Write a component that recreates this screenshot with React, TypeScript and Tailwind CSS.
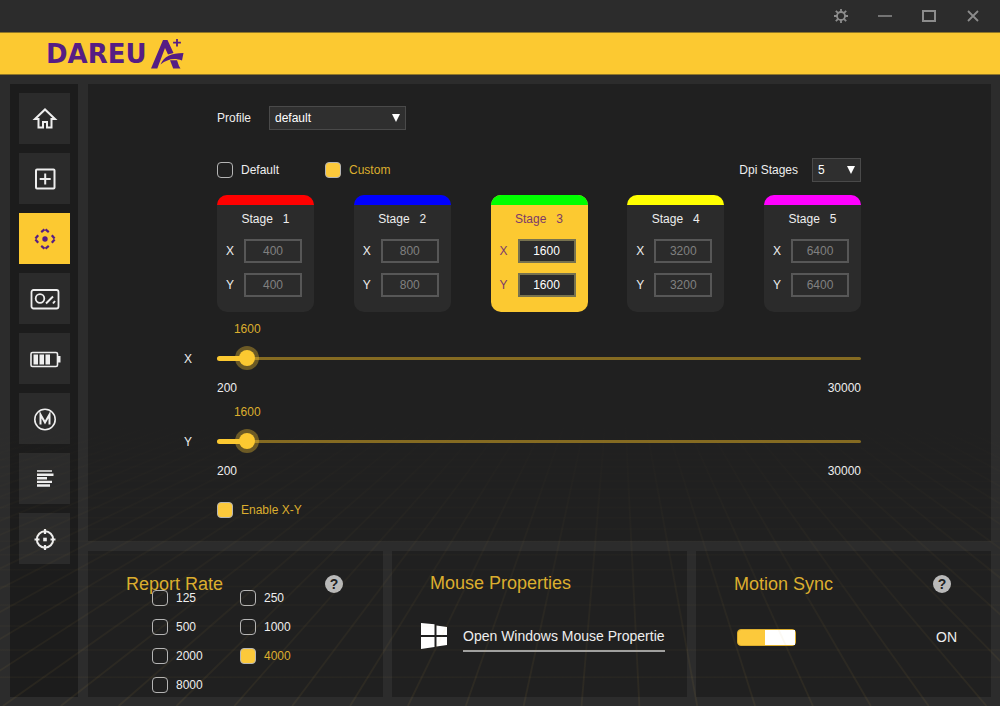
import { useState, ReactNode } from 'react'

const PURPLE = '#561d84'

const MIN_DPI = 200
const MAX_DPI = 30000

const stages = [
  { id: 1, dpi: 400, stripe: 'bg-[#ff0000]' },
  { id: 2, dpi: 800, stripe: 'bg-[#0000ff]' },
  { id: 3, dpi: 1600, stripe: 'bg-[#00ff00]' },
  { id: 4, dpi: 3200, stripe: 'bg-[#ffff00]' },
  { id: 5, dpi: 6400, stripe: 'bg-[#ff00ff]' },
]

const reportRates = [125, 250, 500, 1000, 2000, 4000, 8000]

const navItems: { id: string; label: string; icon: ReactNode }[] = [
  {
    id: 'home',
    label: 'Home',
    icon: (
      <path d="M6 16 16 6.500l10 9.500h-3.500v8.500h-4.500v-5.500h-4v5.500H9.500V16z" strokeWidth="2" />
    ),
  },
  {
    id: 'keys',
    label: 'Buttons',
    icon: (
      <>
        <rect x="7" y="6.500" width="18.500" height="19" rx="1" strokeWidth="2" />
        <path d="M16.200 10.500v11M10.700 16h11" strokeWidth="2" />
      </>
    ),
  },
  {
    id: 'dpi',
    label: 'DPI',
    icon: (
      <>
        <circle cx="16" cy="16" r="2.700" fill="currentColor" stroke="none" />
        <path
          d="M12.200 9.200L16 6l3.800 3.200M12.200 22.800L16 26l3.800-3.200M9.200 12.200L6 16l3.200 3.800M22.800 12.200L26 16l-3.200 3.800"
          strokeWidth="2.200"
          strokeDasharray="4.300 1.300"
        />
      </>
    ),
  },
  {
    id: 'light',
    label: 'Light',
    icon: (
      <>
        <rect x="2.500" y="7" width="27" height="18.500" rx="2" strokeWidth="1.800" />
        <circle cx="11" cy="15.500" r="4.300" strokeWidth="1.800" />
        <path d="M17 20.500l7-7M24 20.500l2-2.500" strokeWidth="2" />
      </>
    ),
  },
  {
    id: 'battery',
    label: 'Battery',
    icon: (
      <>
        <rect x="2" y="9.500" width="26.500" height="14" rx="1.500" strokeWidth="1.600" />
        <path
          d="M4.500 11.500h4.500v10H4.500zM10.500 11.500h4.500v10h-4.500zM16.500 11.500h4.500v10h-4.500zM28.500 13h3v6.500h-3z"
          fill="currentColor"
          stroke="none"
        />
      </>
    ),
  },
  {
    id: 'macro',
    label: 'Macro',
    icon: (
      <>
        <circle cx="16" cy="16.500" r="10.200" strokeWidth="1.600" />
        <path d="M11.500 21.500V11.500l4.500 8 4.500-8v10" strokeWidth="2" />
      </>
    ),
  },
  {
    id: 'log',
    label: 'Settings',
    icon: (
      <>
        <path d="M8 8h15" strokeWidth="1.500" />
        <path d="M8 11.700h16.500M8 15.300h10M8 18.900h15M8 22.500h13" strokeWidth="2.400" />
      </>
    ),
  },
  {
    id: 'sensor',
    label: 'Sensor',
    icon: (
      <>
        <circle cx="16" cy="16.500" r="8.200" strokeWidth="2" />
        <path d="M16 6v5M16 22v5M5.500 16.500h5M21.500 16.500h5" strokeWidth="2.200" />
        <rect x="14.200" y="14.700" width="3.600" height="3.600" fill="currentColor" stroke="none" />
      </>
    ),
  },
]

// perspective floor lines, fading out towards the horizon
function FloorGrid() {
  const rays = Array.from({ length: 81 }, (_, i) => i - 40)
  const rows = Array.from({ length: 24 }, (_, i) => 1 / (0.00229 + i * 0.000178) - 148)
  return (
    <svg
      viewBox="0 0 1000 286"
      preserveAspectRatio="xMidYMax slice"
      aria-hidden="true"
      className="pointer-events-none absolute inset-x-0 bottom-0 h-[286px] w-full"
    >
      <defs>
        <linearGradient id="fade" gradientUnits="userSpaceOnUse" x1="0" y1="0" x2="0" y2="286">
          <stop offset="0" stopColor="#c9a040" stopOpacity="0" />
          <stop offset="0.5" stopColor="#c9a040" stopOpacity="0.04" />
          <stop offset="1" stopColor="#c9a040" stopOpacity="0.08" />
        </linearGradient>
      </defs>
      <g fill="none" stroke="url(#fade)">
        {rays.map((k) => {
          // vanishing point sits at (618, -148)
          const spread = 12.7 + k * 34.4
          return (
            <path
              key={k}
              strokeWidth="1.800"
              d={`M${618 + spread * 0.574} 0L${618 + spread * 1.682} 286`}
            />
          )
        })}
        {rows.filter((y) => y > 0).map((y) => (
          <path key={y} d={`M0 ${y}L1000 ${y + 0.01}`} strokeWidth="1.500" opacity="0.6" />
        ))}
      </g>
    </svg>
  )
}

function Logo() {
  return (
    <div className="flex items-center gap-1 text-[#561d84]">
      <span className="font-['DejaVu_Sans',sans-serif] text-[26px] font-bold leading-none">DAREU</span>
      <svg width="34" height="32" viewBox="0 0 34 32" aria-hidden="true" fill={PURPLE}>
        <path d="M0 30.500 12 2h4.500l6 13-5.500 1.500-3-6.500L6.300 30.500z" />
        <path d="M9.500 26.500c3.500-8 10.500-11.500 23-11.500l-1.500 7.500c-8-3-14.500-1.500-21.500 4z" />
        <path d="M19 22.300h7l2 5.700 1.500 2.500h-7.300z" />
        <path d="M25.100 1h1.800v2.800h3v1.600h-3v3h-1.800v-3h-3V3.800h3z" />
      </svg>
    </div>
  )
}

type CheckProps = {
  label: string
  checked: boolean
  onChange: () => void
}

function Check({ label, checked, onChange }: CheckProps) {
  return (
    <label className={`flex items-center gap-2 ${checked ? 'text-[#dcae2e]' : 'text-[#eeeeee]'}`}>
      <input
        type="checkbox"
        checked={checked}
        onChange={onChange}
        className="size-4 shrink-0 appearance-none rounded border border-[#b5b5b5] bg-transparent checked:bg-[#fcc93b]"
      />
      <span className="leading-4">{label}</span>
    </label>
  )
}

type SelectProps = {
  id: string
  value: string
  options: string[]
  onChange: (v: string) => void
  className: string
}

function Select({ id, value, options, onChange, className }: SelectProps) {
  return (
    <div className={`relative ${className}`}>
      <select
        id={id}
        value={value}
        onChange={(e) => onChange(e.target.value)}
        className="h-6 w-full appearance-none border border-[#4a4a4a] bg-[#2f2f2f] pl-[5px] pr-5 text-white"
      >
        {options.map((o) => (
          <option key={o}>{o}</option>
        ))}
      </select>
      <svg
        width="8"
        height="8"
        viewBox="0 0 8 8"
        aria-hidden="true"
        className="pointer-events-none absolute right-[6px] top-2"
      >
        <path d="M0 0h8L4 8z" fill="#fff" />
      </svg>
    </div>
  )
}

type StageProps = {
  id: number
  dpi: number
  stripe: string
  active: boolean
  onSelect: () => void
}

function StageCard({ id, dpi, stripe, active, onSelect }: StageProps) {
  return (
    <div
      onClick={onSelect}
      className={`w-[97px] overflow-hidden rounded-[10px] pb-[15px] ${
        active ? 'bg-[#fcc931] text-[#7b3a6a]' : 'bg-[#2b2b2b] text-[#eeeeee]'
      }`}
    >
      <div className={`h-[10px] ${stripe}`} />
      <div className="flex h-7 items-center justify-center gap-[10px]">
        <span>Stage</span>
        <span>{id}</span>
      </div>
      <div className="flex flex-col gap-[10px] pt-[6px]">
        {['X', 'Y'].map((axis) => (
          <label key={axis} className="flex items-center justify-between pl-[9px] pr-3">
            {axis}
            <input
              type="text"
              defaultValue={dpi}
              disabled={!active}
              className={`h-6 w-[58px] border-2 bg-[#2b2b2b] text-center ${
                active ? 'border-[#77724f] text-white' : 'border-[#575757] text-[#808080]'
              }`}
            />
          </label>
        ))}
      </div>
    </div>
  )
}

type SliderProps = {
  axis: string
  value: number
  onChange: (v: number) => void
}

function DpiSlider({ axis, value, onChange }: SliderProps) {
  const pct = ((value - MIN_DPI) / (MAX_DPI - MIN_DPI)) * 100
  return (
    <div className="flex items-center">
      <label htmlFor={`slider-${axis}`} className="w-[33px] text-[#eeeeee]">
        {axis}
      </label>
      <div className="flex-1">
        <div className="relative h-[22px] text-[#dcae2e]">
          <span className="absolute top-0 -translate-x-1/2 leading-4" style={{ left: `${pct}%` }}>
            {value}
          </span>
        </div>
        <div className="relative flex h-[30px] items-center">
          <div className="h-[3px] w-full rounded-full bg-[#856b22]" />
          <div className="absolute left-0 h-[5px] rounded-full bg-[#fcc931]" style={{ width: `${pct}%` }} />
          <input
            id={`slider-${axis}`}
            type="range"
            min={MIN_DPI}
            max={MAX_DPI}
            step={50}
            value={value}
            onChange={(e) => onChange(Number(e.target.value))}
            className="absolute inset-y-0 -left-2 w-[calc(100%+16px)] appearance-none bg-transparent [&::-webkit-slider-thumb]:size-4 [&::-webkit-slider-thumb]:appearance-none [&::-webkit-slider-thumb]:rounded-full [&::-webkit-slider-thumb]:bg-[#fcc931] [&::-webkit-slider-thumb]:shadow-[0_0_0_4px_rgba(252,201,49,0.35)]"
          />
        </div>
        <div className="flex justify-between pt-[7px] leading-4 text-[#eeeeee]">
          <span>{MIN_DPI}</span>
          <span>{MAX_DPI}</span>
        </div>
      </div>
    </div>
  )
}

function HelpButton() {
  return (
    <button
      type="button"
      aria-label="Help"
      className="size-[18px] rounded-full bg-[#b9b9b9] text-sm font-bold leading-[18px] text-[#202020]"
    >
      ?
    </button>
  )
}

export default function App() {
  const [profile, setProfile] = useState('default')
  const [mode, setMode] = useState('Custom')
  const [count, setCount] = useState('5')
  const [stage, setStage] = useState(3)
  const [x, setX] = useState(1600)
  const [y, setY] = useState(1600)
  const [split, setSplit] = useState(true)
  const [rate, setRate] = useState(4000)
  const [sync, setSync] = useState(true)
  const [page, setPage] = useState('dpi')

  return (
    <div className="relative flex min-h-screen flex-col bg-[#2c2c2c] font-['Liberation_Sans',Arial,sans-serif] text-xs text-white">
      <header>
        <div className="flex h-8 items-center justify-end gap-[30px] pr-5 text-[#8c8c8c]">
          <button type="button" aria-label="Settings">
            <svg width="14" height="14" viewBox="0 0 14 14" fill="none" stroke="currentColor" strokeWidth="1.800">
              <circle cx="7" cy="7" r="4" />
              <path d="M7 0v3M7 11v3M0 7h3M11 7h3M1.800 1.800l2.400 2.400M9.800 9.800l2.400 2.400M12.200 1.800L9.800 4.200M4.200 9.800l-2.400 2.400" />
            </svg>
          </button>
          <button type="button" aria-label="Minimize">
            <svg width="14" height="14" viewBox="0 0 14 14" stroke="currentColor" strokeWidth="1.500">
              <path d="M0 7h14" />
            </svg>
          </button>
          <button type="button" aria-label="Maximize">
            <svg width="14" height="14" viewBox="0 0 14 14" fill="none" stroke="currentColor" strokeWidth="2">
              <rect x="1" y="2" width="12" height="10" />
            </svg>
          </button>
          <button type="button" aria-label="Close">
            <svg width="14" height="14" viewBox="0 0 14 14" stroke="currentColor" strokeWidth="1.800">
              <path d="M2 2l10 10M12 2L2 12" />
            </svg>
          </button>
        </div>
        <div className="flex h-[43px] items-center border-y border-[#8f7628] bg-[#fcc931] pl-[46px]">
          <Logo />
        </div>
      </header>

      <div className="flex flex-1 gap-[10px] py-[9px] pl-[10px] pr-[9px]">
        <nav className="flex flex-col gap-[9px] bg-[#1c1c1c] pl-[9px] pr-2 pt-[9px]">
          {navItems.map((item) => (
            <button
              key={item.id}
              type="button"
              aria-label={item.label}
              onClick={() => setPage(item.id)}
              className={`flex size-[51px] items-center justify-center ${
                page === item.id ? 'bg-[#fcc931] text-[#561d84]' : 'bg-[#2b2b2b] text-[#eeeeee]'
              }`}
            >
              <svg width="32" height="32" viewBox="0 0 32 32" fill="none" stroke="currentColor">
                {item.icon}
              </svg>
            </button>
          ))}
        </nav>

        <main className="flex min-w-0 flex-1 flex-col gap-[10px]">
          <section className="flex-1 bg-[#202020] pl-24 pr-[130px] pt-[22px]">
            <div className="flex items-center pl-[33px]">
              <label htmlFor="profile" className="w-[52px] text-[#eeeeee]">
                Profile
              </label>
              <Select
                id="profile"
                value={profile}
                options={['default', 'game', 'office']}
                onChange={setProfile}
                className="w-[137px]"
              />
            </div>

            <div className="mt-7 flex items-center justify-between pl-[33px]">
              <div className="flex gap-[46px]">
                {['Default', 'Custom'].map((m) => (
                  <Check key={m} label={m} checked={mode === m} onChange={() => setMode(m)} />
                ))}
              </div>
              <div className="flex items-center gap-[14px]">
                <label htmlFor="count" className="text-[#eeeeee]">
                  Dpi Stages
                </label>
                <Select
                  id="count"
                  value={count}
                  options={['1', '2', '3', '4', '5']}
                  onChange={setCount}
                  className="w-[49px]"
                />
              </div>
            </div>

            <div className="mt-[13px] flex justify-between pl-[33px]">
              {stages.slice(0, Number(count)).map((s) => (
                <StageCard key={s.id} {...s} active={stage === s.id} onSelect={() => setStage(s.id)} />
              ))}
            </div>

            <div className="mt-[9px] flex flex-col gap-2">
              <DpiSlider axis="X" value={x} onChange={setX} />
              <DpiSlider axis="Y" value={y} onChange={setY} />
            </div>

            <div className="mt-[23px] flex pl-[33px]">
              <Check label="Enable X-Y" checked={split} onChange={() => setSplit(!split)} />
            </div>
          </section>

          <div className="grid grid-cols-3 grid-rows-[146px] gap-[9px]">
            <section className="bg-[#202020] pl-[38px] pt-[22px]">
              <div className="flex h-[22px] items-center justify-between pr-10">
                <h2 className="text-lg leading-5 text-[#dcae2e]">Report Rate</h2>
                <HelpButton />
              </div>
              <div className="-mt-3 grid w-[202px] grid-cols-2 pl-[26px]">
                {reportRates.map((r) => (
                  <div key={r} className="flex h-[29px] items-center">
                    <Check label={String(r)} checked={rate === r} onChange={() => setRate(r)} />
                  </div>
                ))}
              </div>
            </section>

            <section className="bg-[#202020] pl-[38px] pt-[22px]">
              <h2 className="h-[22px] text-lg leading-5 text-[#dcae2e]">Mouse Properties</h2>
              <div className="-ml-[9px] mt-7 flex items-start gap-4">
                <svg width="26" height="26" viewBox="0 0 26 26" aria-hidden="true" fill="#fff">
                  <path d="M0 0l13.500 1.200V12H0zM15.500 2.500L26 4v8H15.500zM0 14h13.500v10L0 26zM15.500 14H26v8l-10.500 1.500z" />
                </svg>
                <a
                  href="#mouse"
                  className="border-b-2 border-[#a0a0a0] pb-px text-sm leading-[26px] text-[#eeeeee]"
                >
                  Open Windows Mouse Propertie
                </a>
              </div>
            </section>

            <section className="bg-[#202020] pl-[38px] pt-[22px]">
              <div className="flex h-[22px] items-center justify-between pr-10">
                <h2 className="text-lg leading-5 text-[#dcae2e]">Motion Sync</h2>
                <HelpButton />
              </div>
              <div className="mt-8 flex items-center justify-between pl-[3px] pr-[34px]">
                <button
                  type="button"
                  role="switch"
                  aria-checked={sync}
                  aria-label="Motion Sync"
                  onClick={() => setSync(!sync)}
                  className={`flex h-[17px] w-[59px] rounded-sm border border-[#dcae2e] ${
                    sync ? 'justify-end bg-[#fcc93b]' : 'justify-start bg-[#555555]'
                  }`}
                >
                  <span className="h-full w-[30px] bg-white" />
                </button>
                <span className="text-sm text-[#eeeeee]">{sync ? 'ON' : 'OFF'}</span>
              </div>
            </section>
          </div>
        </main>
      </div>
      <FloorGrid />
    </div>
  )
}
